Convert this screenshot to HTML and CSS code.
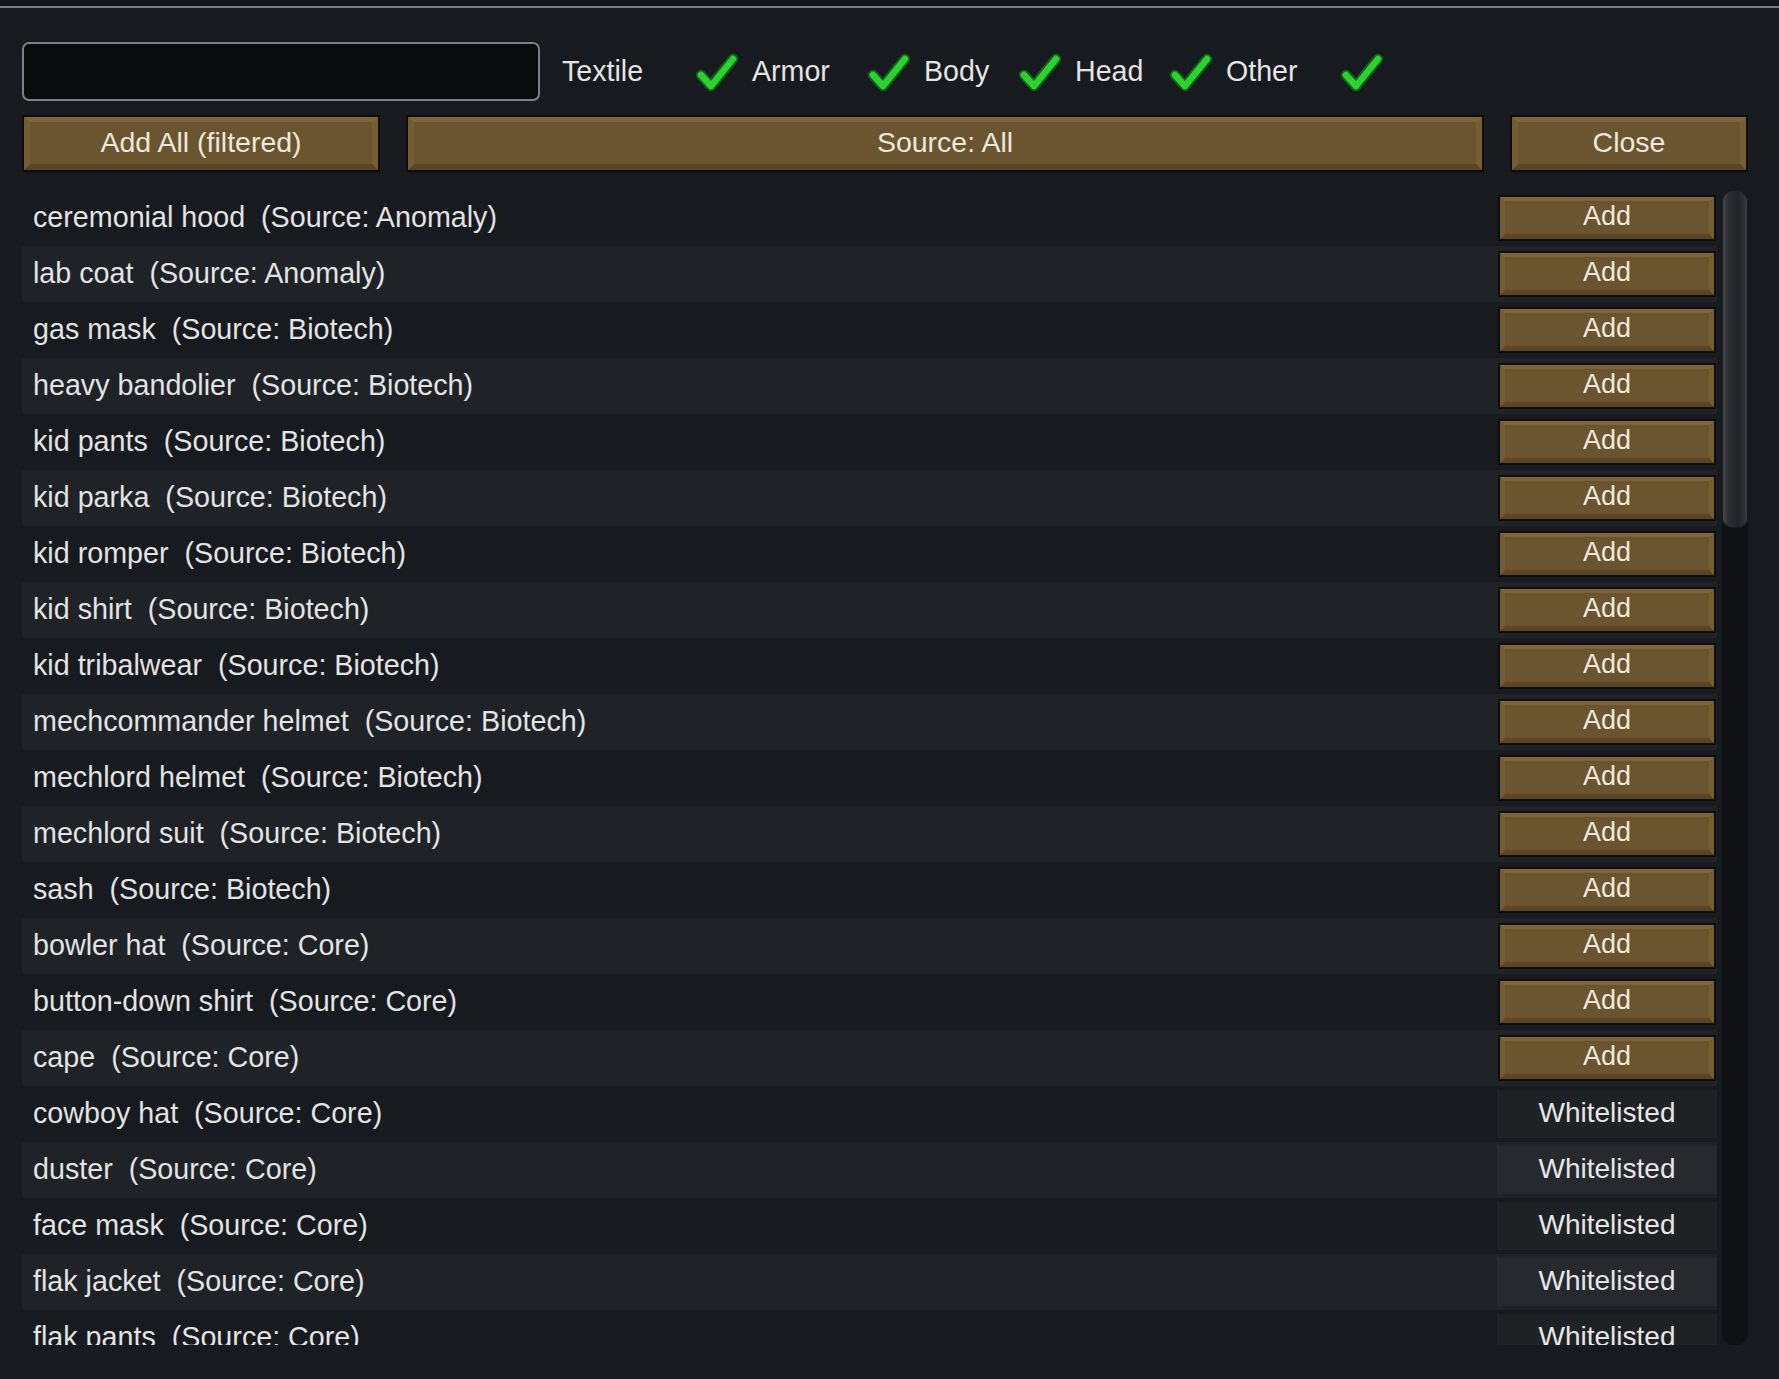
FILE: index.html
```html
<!DOCTYPE html>
<html>
<head>
<meta charset="utf-8">
<link rel="stylesheet" href="styles.css">
</head>
<body>
<div class="topbar"></div>
<div class="window">
  <div class="filters">
    <div class="search"></div>
    <div class="filter"><span class="flabel w-textile">Textile</span><svg class="check" viewBox="0 0 46 42"><path class="ck-o" d="M7 24 L17 35 L39 8"/><path class="ck-i" d="M7 24 L17 35 L39 8"/></svg></div>
    <div class="filter"><span class="flabel w-armor">Armor</span><svg class="check" viewBox="0 0 46 42"><path class="ck-o" d="M7 24 L17 35 L39 8"/><path class="ck-i" d="M7 24 L17 35 L39 8"/></svg></div>
    <div class="filter"><span class="flabel w-body">Body</span><svg class="check" viewBox="0 0 46 42"><path class="ck-o" d="M7 24 L17 35 L39 8"/><path class="ck-i" d="M7 24 L17 35 L39 8"/></svg></div>
    <div class="filter"><span class="flabel w-head">Head</span><svg class="check" viewBox="0 0 46 42"><path class="ck-o" d="M7 24 L17 35 L39 8"/><path class="ck-i" d="M7 24 L17 35 L39 8"/></svg></div>
    <div class="filter"><span class="flabel w-other">Other</span><svg class="check" viewBox="0 0 46 42"><path class="ck-o" d="M7 24 L17 35 L39 8"/><path class="ck-i" d="M7 24 L17 35 L39 8"/></svg></div>
  </div>
  <div class="actions">
    <div class="btn"><span class="btn-in">Add All (filtered)</span></div>
    <div class="btn"><span class="btn-in">Source: All</span></div>
    <div class="btn"><span class="btn-in">Close</span></div>
  </div>
  <div class="list-area">
    <div class="list">
      <div class="row"><span class="name">ceremonial hood  (Source: Anomaly)</span><div class="cell"><div class="btn small"><span class="btn-in">Add</span></div></div></div>
      <div class="row alt"><span class="name">lab coat  (Source: Anomaly)</span><div class="cell"><div class="btn small"><span class="btn-in">Add</span></div></div></div>
      <div class="row"><span class="name">gas mask  (Source: Biotech)</span><div class="cell"><div class="btn small"><span class="btn-in">Add</span></div></div></div>
      <div class="row alt"><span class="name">heavy bandolier  (Source: Biotech)</span><div class="cell"><div class="btn small"><span class="btn-in">Add</span></div></div></div>
      <div class="row"><span class="name">kid pants  (Source: Biotech)</span><div class="cell"><div class="btn small"><span class="btn-in">Add</span></div></div></div>
      <div class="row alt"><span class="name">kid parka  (Source: Biotech)</span><div class="cell"><div class="btn small"><span class="btn-in">Add</span></div></div></div>
      <div class="row"><span class="name">kid romper  (Source: Biotech)</span><div class="cell"><div class="btn small"><span class="btn-in">Add</span></div></div></div>
      <div class="row alt"><span class="name">kid shirt  (Source: Biotech)</span><div class="cell"><div class="btn small"><span class="btn-in">Add</span></div></div></div>
      <div class="row"><span class="name">kid tribalwear  (Source: Biotech)</span><div class="cell"><div class="btn small"><span class="btn-in">Add</span></div></div></div>
      <div class="row alt"><span class="name">mechcommander helmet  (Source: Biotech)</span><div class="cell"><div class="btn small"><span class="btn-in">Add</span></div></div></div>
      <div class="row"><span class="name">mechlord helmet  (Source: Biotech)</span><div class="cell"><div class="btn small"><span class="btn-in">Add</span></div></div></div>
      <div class="row alt"><span class="name">mechlord suit  (Source: Biotech)</span><div class="cell"><div class="btn small"><span class="btn-in">Add</span></div></div></div>
      <div class="row"><span class="name">sash  (Source: Biotech)</span><div class="cell"><div class="btn small"><span class="btn-in">Add</span></div></div></div>
      <div class="row alt"><span class="name">bowler hat  (Source: Core)</span><div class="cell"><div class="btn small"><span class="btn-in">Add</span></div></div></div>
      <div class="row"><span class="name">button-down shirt  (Source: Core)</span><div class="cell"><div class="btn small"><span class="btn-in">Add</span></div></div></div>
      <div class="row alt"><span class="name">cape  (Source: Core)</span><div class="cell"><div class="btn small"><span class="btn-in">Add</span></div></div></div>
      <div class="row"><span class="name">cowboy hat  (Source: Core)</span><div class="cell"><div class="wl">Whitelisted</div></div></div>
      <div class="row alt"><span class="name">duster  (Source: Core)</span><div class="cell"><div class="wl">Whitelisted</div></div></div>
      <div class="row"><span class="name">face mask  (Source: Core)</span><div class="cell"><div class="wl">Whitelisted</div></div></div>
      <div class="row alt"><span class="name">flak jacket  (Source: Core)</span><div class="cell"><div class="wl">Whitelisted</div></div></div>
      <div class="row"><span class="name">flak pants  (Source: Core)</span><div class="cell"><div class="wl">Whitelisted</div></div></div>
    </div>
    <div class="scrollbar"><div class="thumb"></div></div>
  </div>
</div>
</body>
</html>
```

FILE: styles.css
```css
html, body {
  margin: 0;
  padding: 0;
}
body {
  background: #171a1e;
  width: 1779px;
  height: 1379px;
  overflow: hidden;
  font-family: "Liberation Sans", Arial, sans-serif;
  font-size: 28px;
  color: #e2e2e2;
}
.topbar {
  height: 6px;
  background: #131519;
  border-bottom: 2px solid #787b85;
}
.window {
  padding: 0 31px 0 22px;
}
.filters {
  margin-top: 34px;
  height: 59px;
  display: flex;
  align-items: center;
}
.search {
  width: 514px;
  height: 55px;
  background: #0a0b0d;
  border: 2px solid #7d8187;
  border-radius: 7px;
  margin-right: 22px;
  flex: none;
}
.filter {
  display: flex;
  align-items: center;
  margin-right: 12px;
}
.flabel {
  display: block;
  color: #e4e4e4;
  font-size: 28.6px;
}
.w-textile { width: 132px; }
.w-armor { width: 114px; }
.w-body { width: 93px; }
.w-head { width: 93px; }
.w-other { width: 113px; }
.check {
  width: 46px;
  height: 42px;
  display: block;
}
.check path {
  fill: none;
  stroke-linecap: round;
  stroke-linejoin: round;
}
.ck-o {
  stroke: #12601a;
  stroke-width: 10.5;
}
.ck-i {
  stroke: #2cd22f;
  stroke-width: 6.5;
}
.actions {
  margin-top: 14px;
  height: 57px;
  display: grid;
  grid-template-columns: 358px 1fr 238px;
  gap: 26px;
}
.btn {
  border: 2px solid #0e0d0b;
  box-sizing: border-box;
  height: 100%;
}
.btn-in {
  display: flex;
  align-items: center;
  justify-content: center;
  box-sizing: border-box;
  height: 100%;
  background: #6b5430;
  border-style: solid;
  border-width: 5px 6px 6px 6px;
  border-color: #7e6536 #755e33 #594526 #735c33;
  color: #ede8dc;
  padding-bottom: 2px;
  font-size: 28.5px;
}
.list-area {
  margin-top: 18px;
  height: 1155px;
  display: flex;
  gap: 5px;
}
.list {
  flex: 1;
  overflow: hidden;
}
.row {
  height: 56px;
  display: flex;
  align-items: center;
  padding-left: 11px;
}
.row.alt {
  background: #1f2226;
}
.name {
  flex: 1;
  white-space: pre;
  color: #e3e3e3;
  padding-bottom: 2px;
  font-size: 28.7px;
}
.cell {
  width: 220px;
  height: 100%;
  display: flex;
  flex-direction: column;
  justify-content: center;
}
.btn.small {
  height: 46px;
  margin: 0 1px;
}
.btn.small .btn-in {
  font-size: 27px;
  border-width: 4px 5px 5px 5px;
}
.wl {
  height: 48px;
  background: rgba(255, 255, 255, 0.035);
  display: flex;
  align-items: center;
  justify-content: center;
  color: #e6e6e6;
  padding-bottom: 2px;
  box-sizing: border-box;
}
.scrollbar {
  width: 26px;
  background: #0f1114;
  border-radius: 12px;
  overflow: hidden;
}
.thumb {
  height: 338px;
  border-radius: 12px 12px 10px 10px;
  background: linear-gradient(to right, #4a4d52 0%, #2e3135 22%, #202226 60%, #303337 88%, #404347 100%);
  box-shadow: inset 0 0 0 1px #1a1c1f;
}
```
